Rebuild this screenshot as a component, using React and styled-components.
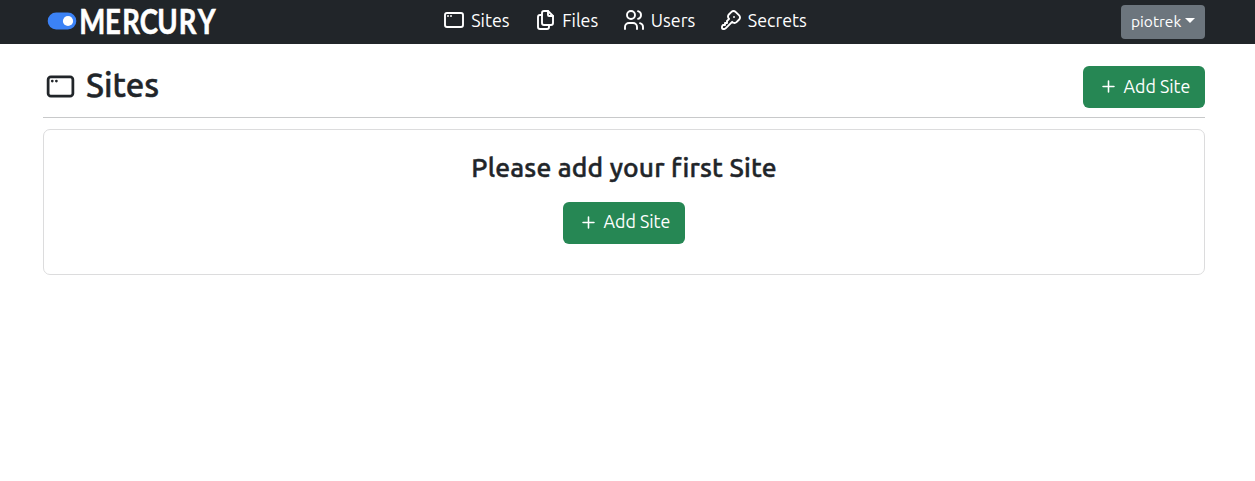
import React from 'react';
import styled, { createGlobalStyle } from 'styled-components';
import { TbAppWindow, TbFiles, TbUsers, TbKey } from 'react-icons/tb';
import { BsPlus } from 'react-icons/bs';

const GlobalStyle = createGlobalStyle`
  *, *::before, *::after { box-sizing: border-box; }
  body {
    margin: 0;
    background: #fff;
    color: #212529;
    font-family: Ubuntu, "Noto Sans", "Open Sans", sans-serif;
  }
`;

const Navbar = styled.header`
  display: grid;
  grid-template-columns: 1fr auto 1fr;
  align-items: center;
  height: 44px;
  padding: 0 50px 0 47px;
  background: #212529;
`;

const Brand = styled.svg`
  display: block;
  width: 172px;
  height: 32px;
  overflow: visible;
`;

const Nav = styled.nav`
  display: flex;
  align-items: center;
  gap: 23.6px;
  margin-left: -3px;
  padding-bottom: 4px;
`;

const NavLink = styled.a`
  display: flex;
  align-items: center;
  gap: 5px;
  color: #fff;
  font-size: 17.9px;
  line-height: 24px;
  text-decoration: none;

  svg { display: block; width: 24px; height: 24px; stroke-width: 1.9; }
`;

const UserButton = styled.button`
  display: flex;
  align-items: center;
  justify-self: end;
  gap: 4px;
  width: 84px;
  height: 34px;
  padding: 0 10px;
  border: 0;
  border-radius: 4px;
  background: #6c757d;
  color: #fff;
  font: 15.5px/22px Ubuntu, "Noto Sans", sans-serif;
`;

const Caret = styled.span`
  border-top: 5px solid currentColor;
  border-left: 5px solid transparent;
  border-right: 5px solid transparent;
  margin-bottom: 3px;
`;

const Page = styled.main`
  padding: 22px 50px 0 43px;
`;

const PageHeader = styled.div`
  display: flex;
  align-items: flex-start;
  justify-content: space-between;
  height: 52px;
  border-bottom: 1px solid #c8c9ca;
`;

const Title = styled.h1`
  display: flex;
  align-items: center;
  gap: 9px;
  margin: 0;
  padding-left: 1px;
  font-size: 33px;
  font-weight: 500;
  line-height: 38px;
  -webkit-text-stroke: 0.5px currentColor;

  svg { display: block; width: 33px; height: 33px; margin-top: 3px; -webkit-text-stroke: 0; }
`;

const AddButton = styled.button`
  display: flex;
  align-items: center;
  gap: 2.5px;
  width: 122px;
  height: 42px;
  padding: 0 0 ${(p) => (p.$raised ? 2 : 1)}px 14px;
  border: 0;
  border-radius: 6px;
  background: #268754;
  color: #fff;
  font: 17.8px/26px Ubuntu, "Noto Sans", sans-serif;
  white-space: nowrap;

  svg { display: block; width: 25px; height: 25px; margin-left: -1px; }
`;

const AddLabel = styled.span`
  margin-bottom: 2px;
`;

const Card = styled.section`
  display: flex;
  flex-direction: column;
  align-items: center;
  height: 146px;
  margin-top: 11px;
  padding-top: 21px;
  border: 1px solid #dcdcdd;
  border-radius: 7px;
`;

const CardTitle = styled.h2`
  margin: 0 0 19px;
  font-size: 26.4px;
  font-weight: 500;
  line-height: 32px;
  letter-spacing: 0.18px;
  -webkit-text-stroke: 0.45px currentColor;
`;

const CONDENSE = 0.81;
const LETTER_STARTS = [32.2, 58, 75.3, 92.8, 110.3, 131.7, 150.8];

function Logo() {
  return (
    <Brand viewBox="0 0 172 32" role="img" aria-label="Mercury">
      <rect x="0.7" y="6.5" width="28.6" height="17" rx="8.5" fill="#3b82f6" />
      <circle cx="21" cy="15" r="5.1" fill="#fff" />
      <text
        transform={`scale(${CONDENSE} 1)`}
        x={LETTER_STARTS.map((x) => (x / CONDENSE).toFixed(2)).join(' ')}
        y="27.6"
        fill="#fff"
        stroke="#fff"
        strokeWidth="0.6"
        fontFamily="Lato, sans-serif"
        fontWeight="700"
        fontSize="34"
      >
        MERCURY
      </text>
    </Brand>
  );
}

function AddSite({ raised }) {
  return (
    <AddButton $raised={raised}>
      <BsPlus />
      <AddLabel>Add Site</AddLabel>
    </AddButton>
  );
}

export default function App() {
  return (
    <>
      <GlobalStyle />
      <Navbar>
        <Logo />
        <Nav>
          <NavLink><TbAppWindow />Sites</NavLink>
          <NavLink><TbFiles />Files</NavLink>
          <NavLink><TbUsers />Users</NavLink>
          <NavLink><TbKey />Secrets</NavLink>
        </Nav>
        <UserButton>piotrek<Caret /></UserButton>
      </Navbar>
      <Page>
        <PageHeader>
          <Title><TbAppWindow />Sites</Title>
          <AddSite />
        </PageHeader>
        <Card>
          <CardTitle>Please add your first Site</CardTitle>
          <AddSite raised />
        </Card>
      </Page>
    </>
  );
}
